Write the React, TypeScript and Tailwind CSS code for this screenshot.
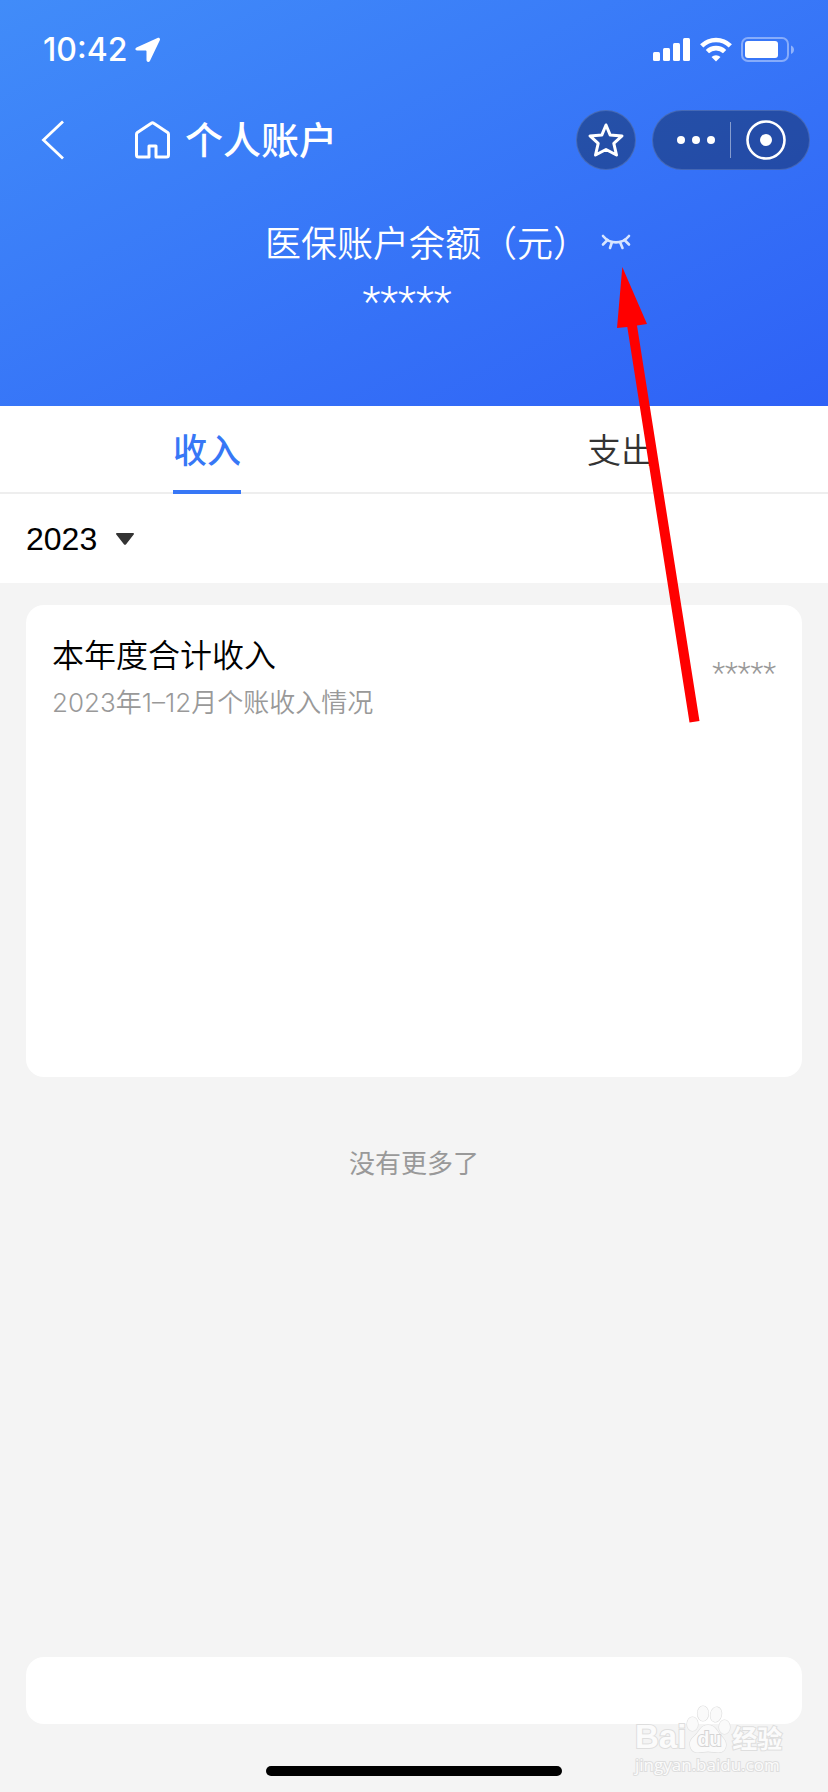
import { useState } from 'react';

type TabKey = 'income' | 'expense';

const tabs: { key: TabKey; label: string }[] = [
  { key: 'income', label: '收入' },
  { key: 'expense', label: '支出' },
];

function StatusBar() {
  return (
    <div className="flex h-[100px] items-center justify-between pl-[43px] pr-[34px]">
      <div className="flex items-center gap-2">
        <span className="font-['Inter',sans-serif] text-[32px] font-medium leading-10">10:42</span>
        <svg width="26" height="26" viewBox="0 0 26 26" fill="currentColor" aria-hidden="true">
          <path d="M22.500 1 1.500 10.500C-.3 11.400.2 13.500 2 13.500h8.500c.6 0 1 .4 1 1V23c0 2.200 2.600 2.700 3.500.8L24.800 3.300C25.500 1.600 24.200.300 22.500 1Z" />
        </svg>
      </div>
      <div className="flex items-center gap-[9px]">
        <svg width="38" height="26" viewBox="0 0 38 26" fill="currentColor" aria-hidden="true">
          <rect x="0" y="15" width="7" height="9" rx="1.500" />
          <rect x="10" y="11" width="7" height="13" rx="1.500" />
          <rect x="20" y="6" width="7" height="18" rx="1.500" />
          <rect x="30" y="1" width="7" height="23" rx="1.500" />
        </svg>
        <svg width="32" height="26" viewBox="0 0 32 26" fill="none" stroke="currentColor" strokeWidth="4.600" aria-hidden="true">
          <path d="M1.700 8.900a20.200 20.200 0 0 1 28.600 0" />
          <path d="M7.400 14.700a12.200 12.200 0 0 1 17.200 0" />
          <path d="M16 24.500 11.500 20a6.500 6.500 0 0 1 9 0Z" fill="currentColor" stroke="none" />
        </svg>
        <svg width="53" height="26" viewBox="0 0 53 26" fill="currentColor" aria-hidden="true">
          <rect x="1" y="1" width="46" height="23" rx="6" fill="none" stroke="currentColor" strokeOpacity=".4" strokeWidth="2" />
          <rect x="4" y="4" width="33" height="17" rx="3" />
          <path d="M50 8.500c4 1.500 4 7 0 8.500Z" fillOpacity=".45" />
        </svg>
      </div>
    </div>
  );
}

function NavBar() {
  return (
    <div className="flex h-20 items-center pl-[40px] pr-[18px]">
      <button type="button" aria-label="返回">
        <svg width="26" height="40" viewBox="0 0 26 40" fill="none" stroke="currentColor" strokeWidth="2.800" aria-hidden="true">
          <path d="M23 1.500 3.500 20 23 38.500" />
        </svg>
      </button>
      <button type="button" aria-label="首页" className="ml-[69px]">
        <svg width="35" height="38" viewBox="0 0 35 38" fill="none" stroke="currentColor" strokeWidth="3" strokeLinejoin="round" aria-hidden="true">
          <path d="M14 36H3.500a2 2 0 0 1-2-2V13.200c0-.7.400-1.300.9-1.700L16.300 2.200a2 2 0 0 1 2.400 0l13.900 9.300c.5.400.9 1 .9 1.700V34a2 2 0 0 1-2 2H21V25h-7v11Z" />
        </svg>
      </button>
      <h1 className="ml-[15px] pb-1 text-[38px] font-medium leading-[56px]">个人账户</h1>
      <div className="ml-auto flex items-center gap-4">
        <button
          type="button"
          aria-label="收藏"
          className="flex size-[60px] items-center justify-center rounded-full border border-white/15 bg-black/32"
        >
          <svg width="38" height="38" viewBox="0 0 38 38" fill="none" stroke="currentColor" strokeWidth="3" strokeLinejoin="round" aria-hidden="true">
            <path d="m19 4 4.100 9.900 11.900 1-8.200 7.400 2.700 11.700L19 28.500 8.500 34l2.700-11.700L3 14.900l11.900-1Z" />
          </svg>
        </button>
        <div className="flex h-[60px] w-[158px] items-center rounded-full border border-white/15 bg-black/32">
          <button type="button" aria-label="更多" className="flex h-full flex-1 items-center justify-end pr-[15px]">
            <svg width="38" height="8" viewBox="0 0 38 8" fill="currentColor" aria-hidden="true">
              <circle cx="4" cy="4" r="4" />
              <circle cx="19" cy="4" r="4" />
              <circle cx="34" cy="4" r="4" />
            </svg>
          </button>
          <span className="h-9 w-px bg-white/45" />
          <button type="button" aria-label="关闭" className="flex h-full items-center pl-[15px] pr-[23px]">
            <svg width="40" height="40" viewBox="0 0 40 40" fill="none" aria-hidden="true">
              <circle cx="20" cy="20" r="18.500" stroke="currentColor" strokeWidth="2.600" />
              <circle cx="20" cy="20" r="6" fill="currentColor" />
            </svg>
          </button>
        </div>
      </div>
    </div>
  );
}

// Red pointer that starts in the list and ends at the eye icon
function Pointer() {
  return (
    <svg
      className="pointer-events-none absolute left-4 top-full z-10 mt-4"
      width="84"
      height="456"
      viewBox="0 0 84 456"
      fill="#ff0000"
      aria-hidden="true"
    >
      <path d="M5.300 0 30 57l-10 1.400L82.500 454l-10 1.500L10.300 60 0 61Z" />
    </svg>
  );
}

function Watermark() {
  return (
    <div
      className="pointer-events-none absolute bottom-[15px] right-[43px] flex w-[150px] flex-col text-[#fbfbfb] [-webkit-text-stroke:2px_#dedede] [paint-order:stroke]"
      aria-hidden="true"
    >
      <div className="flex items-end">
        <span className="font-['Liberation_Sans',sans-serif] text-[33px] font-bold leading-8">Bai</span>
        <div className="relative flex h-[48px] w-[46px] items-end justify-center">
          <svg className="absolute inset-0" width="46" height="48" viewBox="0 0 46 48" fill="#fafafa" stroke="#dedede" strokeWidth="1.200">
            <ellipse cx="6.500" cy="19" rx="5.500" ry="7" />
            <ellipse cx="17" cy="8.500" rx="5.500" ry="7.500" />
            <ellipse cx="30" cy="9.500" rx="5.500" ry="7.500" transform="rotate(12 30 9.500)" />
            <ellipse cx="38.500" cy="22" rx="5.500" ry="7" />
            <path d="M22 20c-7 0-8.500 6-12 9.500C6.500 33 3.500 35 4 40c.5 5 4 7.500 8 7.500 3.500 0 6-.9 10-.9s7 .9 10.500.9c4.500 0 7.500-3 7.500-7.500 0-5-3-7-6-10.500C31 26 29 20 22 20Z" />
          </svg>
          <span className="relative font-['Liberation_Sans',sans-serif] text-[20px] font-bold leading-7 [-webkit-text-stroke:2px_#d4d4d4]">du</span>
        </div>
        <span className="text-[25px] font-bold leading-8">经验</span>
      </div>
      <span className="font-['Open_Sans',sans-serif] text-[17px] leading-6">jingyan.baidu.com</span>
    </div>
  );
}

export default function App() {
  const [activeTab, setActiveTab] = useState<TabKey>('income');
  const [year, setYear] = useState('2023');

  return (
    <div className="relative flex min-h-screen flex-col bg-[#f4f4f4] font-['Noto_Sans_CJK_SC',sans-serif]">
      <header className="bg-[linear-gradient(to_bottom_right,#418cf9,#2e61f6)] pb-[76px] text-white">
        <StatusBar />
        <NavBar />

        {/* Balance */}
        <div className="mt-[33px] flex items-center justify-center gap-3 pl-[68px]">
          <p className="text-[36px] font-[350] leading-[56px]">医保账户余额（元）</p>
          <div className="relative flex">
            <button type="button" aria-label="显示余额">
              <svg width="30" height="20" viewBox="0 0 30 20" fill="none" stroke="#d8e5ff" strokeWidth="2.600" strokeLinecap="round" aria-hidden="true">
                <path d="M2 5c7 8.500 19 8.500 26 0" />
                <path d="M6.500 9 2 13.500M11 11 9 17M19 11l2.500 6M23.500 9l4.500 4.500" />
              </svg>
            </button>
            <Pointer />
          </div>
        </div>
        <p className="mt-[5px] pr-[14px] text-center font-['Roboto',sans-serif] text-[42px] font-light leading-[56px]">*****</p>
      </header>

      {/* Tabs */}
      <div role="tablist" className="flex h-[88px] border-b-2 border-[#eeeeee] bg-white">
        {tabs.map((tab) => (
          <button
            key={tab.key}
            type="button"
            role="tab"
            aria-selected={activeTab === tab.key}
            onClick={() => setActiveTab(tab.key)}
            className="flex h-[88px] flex-1 justify-center"
          >
            <span
              className={`h-full border-b-4 text-[34px] leading-[86px] ${
                activeTab === tab.key
                  ? 'border-[#3777f6] font-medium text-[#3777f6]'
                  : 'border-transparent font-[350] text-[#333333]'
              }`}
            >
              {tab.label}
            </span>
          </button>
        ))}
      </div>

      {/* Year filter */}
      <div className="flex h-[89px] items-center gap-[18px] bg-white px-[26px]">
        <select
          aria-label="年份"
          value={year}
          onChange={(e) => setYear(e.target.value)}
          className="appearance-none bg-transparent font-['Liberation_Sans',sans-serif] text-[32px] leading-10 text-black"
        >
          <option value="2023">2023</option>
        </select>
        <svg width="18" height="12" viewBox="0 0 18 12" fill="#333333" aria-hidden="true">
          <path d="M1 0h16c1 0 1.300.9.7 1.600l-7.600 9.600c-.6.700-1.600.700-2.200 0L.3 1.600C-.3.900 0 0 1 0Z" />
        </svg>
      </div>

      <main className="px-[26px] pt-[22px]">
        <section className="flex min-h-[472px] items-start justify-between rounded-[18px] bg-white px-[26px] pt-6">
          <div>
            <h2 className="text-[32px] font-[350] leading-[48px] text-black">本年度合计收入</h2>
            <p className="mt-[2px] font-['Inter','Noto_Sans_CJK_SC',sans-serif] text-[26px] font-[350] leading-[48px] text-[#999999]">
              2023年1–12月个账收入情况
            </p>
          </div>
          <span className="mt-5 font-['Roboto',sans-serif] text-[30px] font-light leading-[48px] text-[#999999]">*****</span>
        </section>
        <p className="mt-[65px] text-center text-[26px] leading-10 text-[#999999]">没有更多了</p>
      </main>

      <footer className="mt-auto px-[26px] pb-4">
        <div className="h-[67px] rounded-[18px] bg-white" />
        <div className="mx-auto mt-[42px] h-[10px] w-[296px] rounded-full bg-black" />
      </footer>

      <Watermark />
    </div>
  );
}
